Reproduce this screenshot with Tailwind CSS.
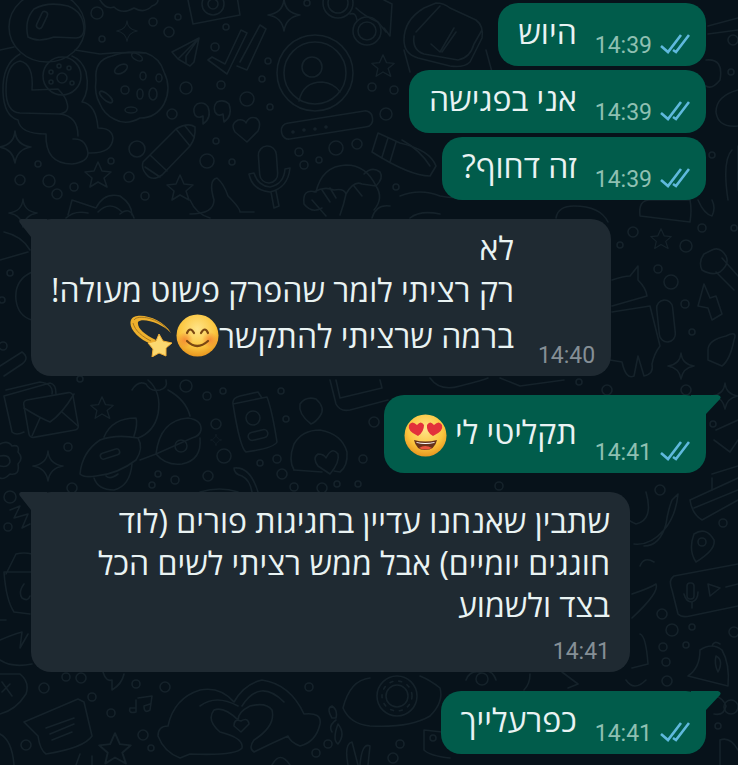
<!DOCTYPE html>
<html lang="he">
  <head>
    <meta charset="UTF-8" />
    <meta name="viewport" content="width=device-width, initial-scale=1.0" />
    <title>Chat</title>
    <!-- Tailwind CSS CDN -->
    <script src="https://cdn.jsdelivr.net/npm/@tailwindcss/browser@4"></script>
  </head>
  <body class="relative min-h-screen overflow-x-hidden bg-[#07121a] font-['Open_Sans','Noto_Sans',sans-serif] text-[#e9f3f3]">
    <!-- Shared shapes -->
    <svg class="hidden" aria-hidden="true">
      <symbol id="star" viewBox="-14 -14 28 28" overflow="visible">
        <path d="M0-13 4-4 13-3 6 3 9 12 0 7-8 12-6 3-13-3-4-4Z" />
      </symbol>
      <symbol id="sparkle" viewBox="-16 -16 32 32" overflow="visible">
        <path d="M0-15Q1-2 15 0Q2 2 0 15Q-2 2-15 0Q-1-2 0-15Z" />
      </symbol>
      <symbol id="ticks" viewBox="0 0 30 20">
        <path d="M1 12 8 18 21 1M13 16 16 18 29 1" fill="none" stroke="#5fb9dd" stroke-width="2.6" />
      </symbol>
      <symbol id="tail-out" viewBox="0 0 30 20">
        <path d="M0 0H27Q31 1 29 4L15 19V20H0Z" fill="#015c4b" />
      </symbol>
      <symbol id="tail-in" viewBox="0 0 28 22">
        <path d="M28 0H2Q-1 1 1 4L12 18V22H28Z" fill="#1f2a32" />
      </symbol>
    </svg>

    <!-- Wallpaper doodles -->
    <svg
      class="absolute inset-0 h-full w-full"
      viewBox="0 0 738 765"
      preserveAspectRatio="xMidYMin slice"
      fill="none"
      stroke="#15222a"
      stroke-width="1.6"
      stroke-linejoin="round"
      stroke-linecap="round"
      aria-hidden="true"
    >
      <!-- astronaut -->
      <ellipse cx="47" cy="27" rx="38" ry="35" />
      <path d="M28 37Q24 20 34 9Q48 1 68 6Q84 12 84 30Q83 38 76 38L54 37Q38 43 28 37Z" />
      <rect x="39" y="11" width="6" height="18" rx="3" transform="rotate(25 42 20)" />
      <path d="M20 54Q2 64 3 92Q4 116 18 120Q20 134 46 134Q45 164 72 164Q88 162 88 153Q112 154 113 138Q112 128 98 128Q96 104 82 102Q90 90 86 72Q82 60 72 56" />
      <path d="M32 90Q34 64 20 61Q6 64 6 90Q6 112 20 113L60 114Q70 112 67 103Q66 97 58 89Z" />
      <circle cx="62" cy="76" r="19" /><circle cx="62" cy="78" r="5" />
      <circle cx="51" cy="72" r="2" /><circle cx="59" cy="66" r="2" /><circle cx="69" cy="68" r="2" /><circle cx="72" cy="83" r="2" /><circle cx="51" cy="82" r="2" />
      <path d="M60 114Q78 116 78 136M73 139Q86 138 88 153M75 50 100 54Q120 52 145 53M0 50 14 47" />
      <!-- cookie -->
      <path d="M96 80Q94 60 112 56Q128 50 146 53Q160 58 164 72Q172 88 164 104Q156 118 140 118Q126 126 114 119Q104 114 100 104Q94 94 96 80Z" />
      <ellipse cx="121" cy="69" rx="7" ry="4" transform="rotate(-30 121 69)" />
      <ellipse cx="143" cy="76" rx="3" ry="4" /><ellipse cx="159" cy="78" rx="3" ry="4" /><ellipse cx="125" cy="90" rx="4" ry="4" />
      <ellipse cx="140" cy="94" rx="3" ry="5" /><ellipse cx="153" cy="94" rx="4" ry="6" /><ellipse cx="131" cy="110" rx="6" ry="3" />
      <ellipse cx="106" cy="97" rx="3" ry="8" transform="rotate(-50 106 97)" /><ellipse cx="137" cy="57" rx="6" ry="3" transform="rotate(30 137 57)" />
      <!-- cloud, paper plane, camera, ticks -->
      <path d="M100 0Q106 10 114 7Q122 15 134 8Q144 14 152 6Q158 4 158 0" />
      <path d="M199 38 172 52 178 59 190 66 194 62ZM199 38 178 59M199 38 186 56V63" />
      <path d="M188 0 193 24 240 15 237-4" /><circle cx="213" cy="4" r="11" /><circle cx="213" cy="4" r="5" />
      <path d="M208 60 227 74 247 33 241 30 225 64 212 57ZM237 66 247 70 266 29 260 25 240 62" />
      <!-- glasses -->
      <circle cx="338" cy="3" r="15" /><circle cx="338" cy="3" r="10" /><circle cx="367" cy="31" r="14" /><circle cx="367" cy="31" r="9" />
      <path d="M350 14Q356 12 357 20M356 8Q364 16 378 22L386 32M384 0 392 4 390 36 384 28" />
      <!-- contact -->
      <circle cx="315" cy="73" r="38" /><circle cx="315" cy="73" r="31" /><circle cx="312" cy="67" r="10" />
      <path d="M299 101Q303 82 322 82Q334 83 340 92" />
      <!-- quotes, heart, password pill -->
      <path d="M203 124Q212 118 208 107Q204 101 197 104Q192 108 195 115Q198 119 203 116ZM224 122Q233 116 229 104Q224 99 217 102Q213 106 215 112Q218 117 223 114Z" />
      <path d="M247 142 235 132Q230 124 238 120Q244 119 246 123Q249 116 256 118Q262 122 258 131Z" />
      <rect x="281" y="117" width="92" height="16" rx="7" transform="rotate(-9 327 125)" />
      <circle cx="293" cy="132" r="1" /><circle cx="304" cy="130" r="1" /><circle cx="315" cy="129" r="1" /><circle cx="326" cy="127" r="1" />
      <!-- pen -->
      <path d="M143 162 176 129Q188 122 195 127Q196 138 190 146L162 175Q152 182 146 174Q141 168 143 162ZM150 155 167 171M176 129 190 146M145 167 160 177M185 126 194 137" />
      <!-- microphone -->
      <rect x="259" y="146" width="18" height="37" rx="9" transform="rotate(-4 268 164)" />
      <path d="M249 174Q252 190 270 192Q288 188 290 168L285 169Q284 184 270 187Q258 186 254 173ZM271 192 274 208 279 206 276 191" />
      <!-- blocks, monkey, thumb -->
      <path d="M378 133 400 143Q430 150 436 166L430 176Q410 176 372 152ZM388 138 382 157M396 142 390 162" />
      <path d="M316 192Q322 166 346 165Q366 165 376 186M316 192Q302 188 304 204Q312 214 322 208M376 186Q384 178 380 172Q372 166 364 174M314 192Q324 186 334 190Q344 188 346 194Q354 180 362 184L376 186Q384 198 374 210M346 194Q344 204 340 215M322 190 330 202M330 188 336 198M354 186 362 196" />
      <path d="M190 214Q214 214 214 200Q208 180 217 178Q224 184 228 196Q240 208 240 212H254" />
      <path d="M68 215 72 200 96 208Q104 192 120 196Q132 204 132 215M98 212Q110 200 122 212" />
      <!-- wrapped box at the top -->
      <path d="M404 40Q404 20 424 8L436 3Q444 3 450 8L476 20Q484 26 482 38L470 62Q464 68 450 66L418 58Q404 54 404 40ZM416 32 440 6M414 36Q412 50 424 54L458 60Q470 58 474 44L482 30M486 50 492 72M404 50 410 72" />
      <path d="M431 44 440 52 454 28M442 52 456 32" />
      <path d="M708 26 738 18M708 34 738 30M706 60Q724 58 720 80Q712 90 706 86M738 90Q716 96 716 112Q718 128 738 126M732 150Q722 160 728 200M738 146V190" />
      <path d="M402 140Q420 150 430 166M400 196Q420 188 440 196Q460 200 480 194" />
      <!-- right side: car, guitar, android, lightning, bell -->
      <path d="M640 216Q638 200 650 200H690Q692 210 690 222ZM698 200Q704 214 712 216Q716 208 712 200" />
      <path d="M704 254Q698 262 702 270Q712 276 720 272Q730 264 726 256Q720 246 712 250ZM722 258 738 276M716 272 734 290" />
      <path d="M612 280Q624 276 630 276L638 266 638 280Q646 288 647 296L612 306M612 312 650 306 660 346Q654 354 652 364Q654 374 644 376L638 356 634 376Q626 380 622 362L610 360" />
      <rect x="658" y="300" width="16" height="42" rx="8" transform="rotate(-6 666 321)" />
      <path d="M704 284 698 306 708 308 712 320 722 314 716 296 710 298ZM708 360 722 366Q730 360 734 340Q738 330 726 336Q708 340 708 350Z" />
      <!-- left edge -->
      <path d="M0 260 28 252M4 232Q22 236 30 250M32 272Q14 280 16 300Q18 316 32 320M0 366 22 352Q30 358 22 364L4 376M6 390 40 382Q54 384 52 394" />
      <!-- between messages -->
      <path d="M66 218Q74 210 88 213M120 214Q130 206 134 218M190 200Q196 214 210 218M312 200 326 216M372 218Q376 204 390 206M556 218Q558 206 574 206Q600 206 608 222M410 218Q420 210 440 214" />
      <!-- envelope -->
      <path d="M4 396 50 383Q56 384 56 394M4 396 12 432Q16 436 24 432" />
      <rect x="26" y="396" width="50" height="38" rx="4" transform="rotate(-10 51 415)" />
      <path d="M24 408Q40 418 50 422Q62 414 74 394M32 436 40 418M78 426 62 412" />
      <!-- rocket and planet -->
      <path d="M80 474Q82 452 100 440Q116 434 138 438Q144 448 136 460Q118 474 96 476Q84 478 80 474ZM104 437Q112 418 136 418Q138 424 134 436M94 478Q98 490 114 490Q130 486 132 464M106 476Q110 480 118 474" />
      <rect x="100" y="451" width="20" height="6" rx="3" transform="rotate(-18 110 454)" />
      <path d="M148 380Q162 392 158 414Q154 432 138 438M168 390Q186 400 190 416M140 460 156 454Q160 420 188 418Q202 420 201 430Q200 436 192 438L156 454Q166 466 182 464Q202 460 200 438" />
      <circle cx="181" cy="446" r="6" /><path d="M132 390Q138 380 146 384Q150 392 160 390Q168 388 166 380" />
      <!-- passport, person with heart, phone -->
      <path d="M233 404 267 397Q272 410 277 442Q274 448 246 452Q240 448 233 404ZM233 404Q232 398 240 396L258 392 262 398" />
      <circle cx="253" cy="418" r="7" /><rect x="248" y="431" width="20" height="8" rx="4" transform="rotate(-14 258 435)" />
      <path d="M311 424Q298 414 300 404Q306 396 316 399Q326 408 320 416Q316 422 311 424ZM294 470Q288 460 294 444Q302 430 320 430Q342 434 347 452Q348 466 340 472L334 471" />
      <path d="M330 474 318 466Q312 458 318 454Q324 454 326 458Q332 446 338 454Q340 462 330 474ZM294 470 322 472" />
      <path d="M330 380 336 404Q340 412 350 410L388 400M336 380 340 398 382 388 380 380" />
      <path d="M234 468Q250 466 258 492M234 468Q234 474 242 476Q250 480 252 492M200 492Q220 486 238 492M0 444Q8 440 12 446Q20 444 18 452Q24 458 18 464Q20 476 10 474Q4 480 0 478M0 456Q10 454 10 462Q8 468 0 466" />
      <path d="M500 378 520 386 564 380M430 378Q440 392 460 386Q484 380 488 378M716 430 738 420M714 440 730 452 738 440M712 474 738 466M712 478V490" />
      <!-- right of the long message -->
      <path d="M612 500Q624 520 636 524Q654 520 646 492M634 544Q650 546 664 530Q676 516 678 494L672 500Q668 510 666 524Q660 546 644 546M640 566Q644 556 654 562" />
      <path d="M690 500 738 478M694 508 738 490M690 500Q692 514 702 520L738 500M696 562Q688 550 694 534Q706 526 714 540Q716 550 696 562Z" />
      <circle cx="702" cy="542" r="4" />
      <path d="M738 564 674 576Q668 580 672 590L678 614Q682 618 690 616L738 606M708 584 710 596 720 588ZM726 587 738 584" />
      <rect x="687" y="583" width="7" height="16" rx="3" /><path d="M684 594Q686 602 692 602Q698 600 698 592M692 602V608" />
      <path d="M632 594Q650 588 656 584Q660 592 632 618M640 634Q646 636 648 664L632 668" />
      <path d="M688 676Q700 668 700 650Q712 642 722 650Q730 664 728 686ZM716 656Q724 660 718 672Q714 664 716 656ZM712 646Q714 640 720 644" />
      <!-- left strip beside the long message -->
      <path d="M10 510 20 506 14 518 28 514 22 528 30 524M6 574 16 554Q24 552 32 554M4 572H32M4 572Q6 600 14 612L30 614M24 584Q18 592 22 598Q28 602 30 596M0 620H6M0 640Q14 634 22 632M22 632 20 648 28 634M0 660Q12 668 32 664" />
      <!-- bottom doodles -->
      <path d="M0 674H20Q30 682 26 694Q16 710 0 714M2 682 12 696M10 684 2 692M24 722 78 699 84 702 92 736Q84 748 46 754Q40 750 38 736ZM46 728 74 718M50 734 74 724M52 740 72 732M0 734Q12 740 14 765" />
      <path d="M103 672Q106 682 112 680V690Q122 684 124 674M136 700V712Q128 714 130 708H136M138 698 152 696 150 710Q144 714 144 706L150 704" />
      <path d="M168 726Q174 698 200 690Q220 686 234 702Q244 684 262 680Q290 684 304 714Q322 712 320 724Q316 742 300 746Q290 742 288 736Q270 744 254 752Q248 748 254 740Q276 726 272 710Q266 702 250 706Q238 712 238 720Q224 706 214 710Q206 720 220 732Q244 738 242 748Q236 756 190 754L180 758Q164 752 158 736Q158 726 168 726M200 706Q216 694 238 706M242 706Q260 678 284 702" />
      <path d="M241 732 234 726Q234 718 241 721Q248 717 249 724Z" />
      <path d="M370 678Q350 680 343 708Q350 724 370 726Q410 728 430 716Q444 702 440 688Q430 680 420 676" />
      <circle cx="397" cy="696" r="20" /><circle cx="397" cy="696" r="11" /><circle cx="397" cy="696" r="15" stroke-dasharray="3 6" />
      <path d="M332 718Q326 708 332 706Q338 710 336 718ZM336 720Q328 726 332 732M338 724Q346 734 338 744Q332 740 338 724M348 765Q344 744 352 742L358 765M360 765Q362 742 370 746L368 765M272 765Q280 750 290 765M76 765 80 754M92 765V756" />
      <path d="M424 730 442 732M424 730 424 750Q430 756 450 758M530 674Q530 684 524 690M562 672 578 684 568 688M626 680Q634 692 646 680M698 700Q720 690 726 706Q724 716 714 714M720 765V740Q730 736 738 750" />
      <circle cx="482" cy="679" r="6" /><path d="M466 680Q470 670 480 672Q492 668 496 680" />
      <!-- stars -->
      <g>
        <use href="#star" x="371" y="54" width="24" height="24" />
        <use href="#star" x="84" y="161" width="28" height="28" />
        <use href="#star" x="166" y="174" width="28" height="28" />
        <use href="#star" x="650" y="228" width="22" height="22" />
        <use href="#star" x="90" y="396" width="24" height="24" />
        <use href="#star" x="98" y="732" width="34" height="34" />
        <use href="#sparkle" x="267" y="-2" width="34" height="34" />
        <use href="#sparkle" x="116" y="20" width="22" height="22" />
        <use href="#sparkle" x="-2" y="130" width="34" height="34" />
        <use href="#sparkle" x="8" y="198" width="30" height="30" />
        <use href="#sparkle" x="32" y="450" width="32" height="32" />
        <use href="#sparkle" x="667" y="352" width="28" height="28" />
        <use href="#sparkle" x="711" y="382" width="28" height="28" />
        <use href="#sparkle" x="210" y="434" width="12" height="12" />
      </g>
      <!-- bubbles -->
      <g>
        <circle cx="97" cy="13" r="6" /><circle cx="102" cy="39" r="3" /><circle cx="153" cy="22" r="4" /><circle cx="169" cy="32" r="5" />
        <circle cx="178" cy="17" r="3" /><circle cx="215" cy="47" r="4" /><circle cx="226" cy="27" r="3" /><circle cx="186" cy="88" r="6" />
        <circle cx="221" cy="85" r="4" /><circle cx="247" cy="99" r="7" /><circle cx="262" cy="79" r="3" /><circle cx="268" cy="61" r="3" />
        <circle cx="307" cy="3" r="3" /><circle cx="270" cy="107" r="3" /><circle cx="172" cy="114" r="5" /><circle cx="137" cy="149" r="8" />
        <circle cx="216" cy="141" r="3" /><circle cx="207" cy="161" r="7" /><circle cx="232" cy="162" r="3" /><circle cx="129" cy="177" r="5" />
        <circle cx="145" cy="196" r="4" /><circle cx="111" cy="161" r="3" /><circle cx="49" cy="181" r="6" /><circle cx="38" cy="164" r="3" />
        <circle cx="20" cy="180" r="5" /><circle cx="57" cy="194" r="5" /><circle cx="74" cy="187" r="4" /><circle cx="372" cy="87" r="4" />
        <circle cx="394" cy="90" r="4" /><circle cx="386" cy="114" r="6" /><circle cx="336" cy="148" r="7" /><circle cx="357" cy="144" r="5" />
        <circle cx="299" cy="152" r="4" /><circle cx="304" cy="165" r="4" /><circle cx="319" cy="160" r="3" /><circle cx="396" cy="187" r="3" />
        <circle cx="731" cy="72" r="3" /><circle cx="712" cy="155" r="3" /><circle cx="733" cy="40" r="5" />
        <circle cx="633" cy="232" r="5" /><circle cx="620" cy="245" r="3" /><circle cx="686" cy="246" r="6" /><circle cx="702" cy="228" r="4" />
        <circle cx="658" cy="269" r="4" /><circle cx="671" cy="282" r="7" /><circle cx="685" cy="304" r="4" /><circle cx="692" cy="332" r="3" />
        <circle cx="734" cy="228" r="3" /><circle cx="579" cy="382" r="3" /><circle cx="607" cy="390" r="5" /><circle cx="686" cy="390" r="5" />
        <circle cx="10" cy="273" r="3" /><circle cx="2" cy="300" r="3" /><circle cx="3" cy="346" r="4" /><circle cx="80" cy="379" r="3" />
        <circle cx="186" cy="386" r="6" /><circle cx="207" cy="396" r="4" /><circle cx="223" cy="391" r="3" /><circle cx="216" cy="424" r="5" />
        <circle cx="224" cy="456" r="7" /><circle cx="281" cy="391" r="3" /><circle cx="286" cy="419" r="3" /><circle cx="260" cy="463" r="3" />
        <circle cx="277" cy="459" r="4" /><circle cx="282" cy="474" r="5" /><circle cx="208" cy="476" r="5" /><circle cx="175" cy="480" r="4" />
        <circle cx="158" cy="474" r="3" /><circle cx="152" cy="485" r="3" /><circle cx="68" cy="447" r="4" /><circle cx="363" cy="459" r="4" />
        <circle cx="358" cy="484" r="3" /><circle cx="337" cy="484" r="3" /><circle cx="322" cy="488" r="5" /><circle cx="294" cy="487" r="4" />
        <circle cx="374" cy="422" r="5" /><circle cx="499" cy="486" r="4" /><circle cx="713" cy="424" r="3" />
        <circle cx="72" cy="488" r="5" /><circle cx="10" cy="497" r="6" /><circle cx="8" cy="527" r="4" />
        <circle cx="660" cy="490" r="5" /><circle cx="723" cy="523" r="4" /><circle cx="662" cy="614" r="5" /><circle cx="672" cy="630" r="6" />
        <circle cx="692" cy="627" r="3" /><circle cx="663" cy="647" r="4" /><circle cx="686" cy="645" r="3" /><circle cx="666" cy="662" r="4" />
        <circle cx="667" cy="681" r="5" /><circle cx="734" cy="632" r="5" /><circle cx="731" cy="707" r="7" /><circle cx="718" cy="726" r="3" />
        <circle cx="44" cy="688" r="5" /><circle cx="66" cy="677" r="4" /><circle cx="81" cy="678" r="5" /><circle cx="92" cy="697" r="4" />
        <circle cx="136" cy="684" r="4" /><circle cx="165" cy="687" r="5" /><circle cx="111" cy="713" r="4" /><circle cx="143" cy="735" r="5" />
        <circle cx="151" cy="748" r="3" /><circle cx="26" cy="745" r="5" /><circle cx="309" cy="687" r="4" /><circle cx="328" cy="744" r="4" />
        <circle cx="316" cy="753" r="4" /><circle cx="433" cy="738" r="3" /><circle cx="400" cy="744" r="4" /><circle cx="393" cy="758" r="5" />
      </g>
    </svg>

    <!-- Messages -->
    <main class="relative flex flex-col gap-[19px] pt-[3px] pr-8 pb-2 pl-[31px]">
      <section class="flex flex-col items-end gap-1">
        <article class="flex h-[63px] items-end gap-[18px] rounded-[20px] bg-[#015c4b] pr-4 pl-5">
          <p dir="rtl" class="self-start pt-2 text-[32px] leading-[42px]">היוש</p>
          <div class="flex items-center gap-2 pb-1.5">
            <time class="font-[Roboto] text-[23px] leading-7 text-[#8fc0b2]">14:39</time>
            <svg class="mb-1 h-5 w-[30px]" role="img" aria-label="נקרא"><use href="#ticks" /></svg>
          </div>
        </article>
        <article class="flex h-[63px] items-end gap-[18px] rounded-[20px] bg-[#015c4b] pr-4 pl-5">
          <p dir="rtl" class="self-start pt-2 text-[32px] leading-[42px]">אני בפגישה</p>
          <div class="flex items-center gap-2 pb-1.5">
            <time class="font-[Roboto] text-[23px] leading-7 text-[#8fc0b2]">14:39</time>
            <svg class="mb-1 h-5 w-[30px]" role="img" aria-label="נקרא"><use href="#ticks" /></svg>
          </div>
        </article>
        <article class="flex h-[63px] items-end gap-[18px] rounded-[20px] bg-[#015c4b] pr-4 pl-5">
          <p dir="rtl" class="self-start pt-2 text-[32px] leading-[42px]">זה דחוף?</p>
          <div class="flex items-center gap-2 pb-1.5">
            <time class="font-[Roboto] text-[23px] leading-7 text-[#8fc0b2]">14:39</time>
            <svg class="mb-1 h-5 w-[30px]" role="img" aria-label="נקרא"><use href="#ticks" /></svg>
          </div>
        </article>
      </section>

      <article class="relative flex h-[157px] items-end gap-6 self-start rounded-[20px] bg-[#1f2a32] pr-4 pl-5">
        <svg class="absolute top-0 -left-3 h-[22px] w-7" aria-hidden="true"><use href="#tail-in" /></svg>
        <p dir="rtl" class="self-start pt-2 text-[32px] leading-[42px]">
          לא<br />
          רק רציתי לומר שהפרק פשוט מעולה!
          <span class="flex items-center pt-[3px]">ברמה שרציתי להתקשר<svg class="size-[43px]" viewBox="0 0 43 43" role="img" aria-label="😊">
            <defs>
              <radialGradient id="face" cx="50%" cy="35%" r="65%">
                <stop offset="0" stop-color="#ffe58a" />
                <stop offset=".65" stop-color="#fbc63f" />
                <stop offset="1" stop-color="#e8961f" />
              </radialGradient>
              <radialGradient id="blush">
                <stop offset="0" stop-color="#f2772e" stop-opacity=".75" />
                <stop offset="1" stop-color="#f2772e" stop-opacity="0" />
              </radialGradient>
            </defs>
            <circle cx="21.5" cy="21.5" r="21" fill="url(#face)" />
            <circle cx="9" cy="26" r="8" fill="url(#blush)" />
            <circle cx="34" cy="26" r="8" fill="url(#blush)" />
            <path d="M11 19Q14 12 18 19M25 19Q29 12 32 19M11 27Q21 37 32 27" fill="none" stroke="#7a4712" stroke-width="2.2" stroke-linecap="round" />
          </svg><svg class="mr-1 size-[43px]" viewBox="0 0 43 43" role="img" aria-label="💫">
            <path d="M23 30C8 25-1 13 2 6C6-3 33 3 42 19C33 9 13 3 9 8C8 14 15 20 27 26Z" fill="#eeb02c" />
            <path d="M5 6C9 0 30 4 40 17M4 9C6 17 14 23 22 27" fill="none" stroke="#a87920" />
            <path d="M30 20 34 27 43 29 37 34 37 42 30 39 23 43 24 35 19 29 27 27Z" fill="#fbd870" stroke="#f0ae35" />
          </svg></span>
        </p>
        <time class="pb-1.5 font-[Roboto] text-[23px] leading-7 text-[#858f96]">14:40</time>
      </article>

      <article class="relative flex h-[78px] items-end gap-[18px] self-end rounded-[20px] bg-[#015c4b] pr-4 pl-5">
        <svg class="absolute top-0 -right-[15px] h-5 w-[30px]" aria-hidden="true"><use href="#tail-out" /></svg>
        <p dir="rtl" class="self-start pt-4 text-[32px] leading-[42px]">
          תקליטי לי
          <svg class="inline-block size-[43px] align-middle" viewBox="0 0 43 43" role="img" aria-label="😍">
            <circle cx="21.5" cy="21.5" r="21" fill="url(#face)" />
            <path d="M14 22Q3 17 5 11Q8 6 13 11Q17 6 20 11Q20 18 14 22ZM29 22Q22 18 23 11Q26 6 30 11Q35 6 38 11Q40 17 29 22Z" fill="#e3313b" />
            <path d="M10 26Q21 29 33 26Q31 36 21 36Q12 36 10 26Z" fill="#65321b" />
            <path d="M12 28Q21 30 31 28L30 29Q21 31 13 29Z" fill="#fff" />
            <path d="M15 34Q21 30 28 34Q21 37 15 34Z" fill="#e8553e" />
          </svg>
        </p>
        <div class="flex items-center gap-2 pb-1.5">
          <time class="font-[Roboto] text-[23px] leading-7 text-[#8fc0b2]">14:41</time>
          <svg class="mb-1 h-5 w-[30px]" role="img" aria-label="נקרא"><use href="#ticks" /></svg>
        </div>
      </article>

      <article class="relative flex max-w-[599px] flex-col self-start rounded-[20px] bg-[#1f2a32] px-5 pt-2 pb-1.5">
        <svg class="absolute top-0 -left-3 h-[22px] w-7" aria-hidden="true"><use href="#tail-in" /></svg>
        <p dir="rtl" class="text-[32px] leading-[42px]">
          שתבין שאנחנו עדיין בחגיגות פורים (לוד חוגגים יומיים) אבל ממש רציתי לשים הכל בצד ולשמוע
        </p>
        <time class="mt-3 self-end font-[Roboto] text-[23px] leading-7 text-[#858f96]">14:41</time>
      </article>

      <article class="relative flex h-[63px] items-end gap-[18px] self-end rounded-[20px] bg-[#015c4b] pr-4 pl-5">
        <svg class="absolute top-0 -right-[15px] h-5 w-[30px]" aria-hidden="true"><use href="#tail-out" /></svg>
        <p dir="rtl" class="self-start pt-2 text-[32px] leading-[42px]">כפרעלייך</p>
        <div class="flex items-center gap-2 pb-1.5">
          <time class="font-[Roboto] text-[23px] leading-7 text-[#8fc0b2]">14:41</time>
          <svg class="mb-1 h-5 w-[30px]" role="img" aria-label="נקרא"><use href="#ticks" /></svg>
        </div>
      </article>
    </main>
  </body>
</html>
